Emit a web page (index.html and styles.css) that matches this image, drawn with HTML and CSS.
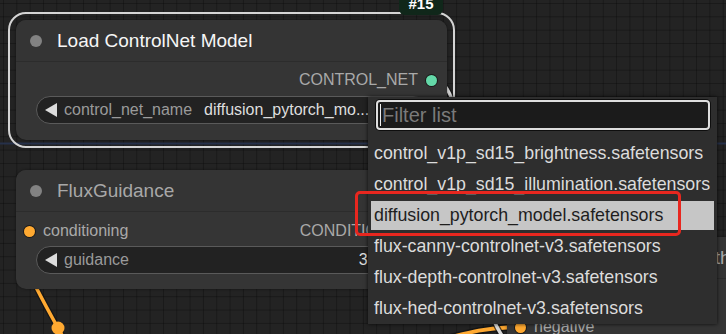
FILE: index.html
```html
<!DOCTYPE html>
<html lang="en">
<head>
<meta charset="utf-8">
<title>ComfyUI - ControlNet</title>
<link rel="stylesheet" href="styles.css">
</head>
<body>
<div class="canvas">
  <svg class="links" width="726" height="334" viewBox="0 0 726 334">
    <line x1="0" y1="143.5" x2="726" y2="143.5" stroke="#26314a" stroke-width="2"/>
    <path d="M 87 425 C 137 425, -21 231, 29 231" fill="none" stroke="#111" stroke-width="6" stroke-opacity="0.7"/>
    <path d="M 87 425 C 137 425, -21 231, 29 231" fill="none" stroke="#ffa931" stroke-width="3.5"/>
    <circle cx="58" cy="328" r="6.5" fill="#ffa931"/>
    <path d="M 400 350 C 450 340, 470 327, 521 327" fill="none" stroke="#111" stroke-width="7" stroke-opacity="0.7"/>
    <path d="M 400 350 C 450 340, 470 327, 521 327" fill="none" stroke="#ffa931" stroke-width="4"/>
    <path d="M 436 80 C 475 85, 460 300, 510 345" fill="none" stroke="#111" stroke-width="6" stroke-opacity="0.7"/>
    <path d="M 436 80 C 475 85, 460 300, 510 345" fill="none" stroke="#d8d8d8" stroke-width="3.5"/>
  </svg>

  <div class="node node-apply">
    <div class="node-title"><span class="title-dot"></span><span class="title-text dim">Apply ControlNet with VAE</span></div>
    <div class="node-body">
      <div class="slot-row"><span class="slot-dot in orange"></span><span class="slot-label">positive</span></div>
      <div class="slot-row"><span class="slot-dot in orange"></span><span class="slot-label">negative</span></div>
    </div>
  </div>

  <div class="node node-load selected">
    <div class="badge">#15</div>
    <div class="node-title"><span class="title-dot"></span><span class="title-text">Load ControlNet Model</span></div>
    <div class="node-body">
      <div class="slot-row out"><span class="slot-label">CONTROL_NET</span><span class="slot-dot green"></span></div>
      <div class="widget">
        <span class="arrow"></span>
        <span class="w-label">control_net_name</span>
        <span class="w-value">diffusion_pytorch_mo...</span>
      </div>
    </div>
  </div>

  <div class="node node-flux">
    <div class="node-title"><span class="title-dot"></span><span class="title-text dim">FluxGuidance</span></div>
    <div class="node-body">
      <div class="slot-row split">
        <span class="slot-in"><span class="slot-dot orange"></span><span class="slot-label">conditioning</span></span>
        <span class="slot-out"><span class="slot-label">CONDITIONING</span><span class="slot-dot orange"></span></span>
      </div>
      <div class="widget">
        <span class="arrow"></span>
        <span class="w-label">guidance</span>
        <span class="w-num">3.5</span>
        <span class="arrow right"></span>
      </div>
    </div>
  </div>

  <div class="dropdown">
    <div class="filter"><span class="caret"></span><span class="placeholder">Filter list</span></div>
    <ul class="items">
      <li>control_v1p_sd15_brightness.safetensors</li>
      <li>control_v1p_sd15_illumination.safetensors</li>
      <li class="active">diffusion_pytorch_model.safetensors</li>
      <li>flux-canny-controlnet-v3.safetensors</li>
      <li>flux-depth-controlnet-v3.safetensors</li>
      <li>flux-hed-controlnet-v3.safetensors</li>
    </ul>
  </div>

  <div class="highlight-box"></div>
</div>
</body>
</html>
```

FILE: styles.css
```css
* { box-sizing: border-box; }

html, body {
  margin: 0;
  padding: 0;
  background: #222;
}

body {
  font-family: "Liberation Sans", Arial, sans-serif;
}

.canvas {
  position: relative;
  width: 726px;
  height: 334px;
  overflow: hidden;
  background-color: #232323;
  background-image:
    linear-gradient(to right, rgba(0,0,0,0.28) 1px, transparent 1px),
    linear-gradient(to bottom, rgba(0,0,0,0.28) 1px, transparent 1px);
  background-size: 13.333px 13.333px;
  background-position: 3px 3px;
}

.links {
  position: absolute;
  left: 0;
  top: 0;
}

/* nodes on the graph canvas */
.node {
  position: absolute;
  background: #353535;
  border-radius: 10px;
  box-shadow: 0 0 3px rgba(0,0,0,0.5);
}

.node.selected {
  outline: 2px solid #d4d4d4;
  outline-offset: 6px;
}

.node-load { left: 16px; top: 20px; width: 431px; height: 120px; }
.node-flux { left: 16px; top: 170px; width: 431px; height: 119px; }
.node-apply { left: 507px; top: 237px; width: 330px; height: 160px; }

.node-title {
  height: 42px;
  display: flex;
  align-items: center;
  padding-left: 14px;
  gap: 15px;
  background: #343434;
  border-bottom: 1px solid #2c2c2c;
  border-radius: 10px 10px 0 0;
}

.title-dot {
  width: 12px;
  height: 12px;
  border-radius: 50%;
  background: #828282;
  flex: none;
}

.title-text {
  font-size: 19px;
  color: #f6f6f6;
  white-space: nowrap;
}

.title-text.dim { color: #a8a8a8; }

.node-body {
  display: flex;
  flex-direction: column;
  padding-top: 4px;
  gap: 2px;
}

.node-flux .node-body { padding-top: 5px; gap: 1px; }
.node-apply .node-body { padding-top: 5px; gap: 1px; }

.slot-row {
  height: 28px;
  display: flex;
  align-items: center;
  padding: 0 10px 0 8px;
  font-size: 16px;
  color: #a9a9a9;
  gap: 8px;
}

.slot-row.out { justify-content: flex-end; }
.slot-row.split { justify-content: space-between; }

.slot-in, .slot-out {
  display: flex;
  align-items: center;
  gap: 8px;
}

.slot-dot {
  width: 11px;
  height: 11px;
  border-radius: 50%;
  flex: none;
  box-shadow: 0 0 0 1px #1a1a1a;
}

.slot-dot.green { background: #64d8a8; }
.slot-dot.orange { background: #ffa931; }

.slot-label { white-space: nowrap; }

.widget {
  margin: 0 20px;
  height: 28px;
  border: 1px solid #5a5a5a;
  border-radius: 14px;
  background: #222;
  display: flex;
  align-items: center;
  padding: 0 8px;
  font-size: 16px;
  white-space: nowrap;
  overflow: hidden;
}

.arrow {
  width: 0;
  height: 0;
  flex: none;
  border-top: 7px solid transparent;
  border-bottom: 7px solid transparent;
  border-right: 12px solid #dcdcdc;
  margin-right: 7px;
}

.arrow.right {
  border-right: 0;
  border-left: 12px solid #dcdcdc;
  margin-right: 0;
  margin-left: 8px;
}

.w-label { color: #9a9a9a; }
.w-value { color: #dedede; margin-left: 12px; }
.w-num { color: #dedede; margin-left: auto; margin-right: 17px; }

.badge {
  position: absolute;
  left: 383px;
  top: -27px;
  width: 44px;
  height: 22px;
  line-height: 22px;
  text-align: center;
  background: #10271a;
  color: #fff;
  font-weight: bold;
  font-size: 15px;
  border-radius: 6px;
}

/* context dropdown overlay */
.dropdown {
  position: absolute;
  left: 368px;
  top: 97px;
  width: 349px;
  height: 227px;
  background: #2e2e2e;
  padding: 3px 3px 1px 3px;
  box-shadow: 0 0 4px rgba(0,0,0,0.8);
  display: flex;
  flex-direction: column;
}

.filter {
  margin: 0 4px 0 5px;
  height: 30px;
  border: 2px solid #dedede;
  border-radius: 4px;
  background: #1b1b1b;
  box-shadow: 0 0 0 1px #0e0e0e;
  display: flex;
  align-items: center;
  padding-left: 2px;
  font-size: 20px;
}

.caret {
  width: 1px;
  height: 22px;
  background: #f0f0f0;
  margin-right: 1px;
}

.placeholder { color: #7a7a7a; }

.items {
  list-style: none;
  margin: 9px 0 0 0;
  padding: 0;
  display: flex;
  flex-direction: column;
  gap: 2px;
}

.items li {
  height: 29px;
  line-height: 29px;
  padding-left: 3px;
  font-size: 17.8px;
  color: #dcdcdc;
  white-space: nowrap;
}

.items li.active {
  background: #c6c6c6;
  color: #1e1e1e;
}

.highlight-box {
  position: absolute;
  left: 355px;
  top: 191px;
  width: 326px;
  height: 45px;
  border: 3px solid #e8271f;
  border-radius: 5px;
}
```
